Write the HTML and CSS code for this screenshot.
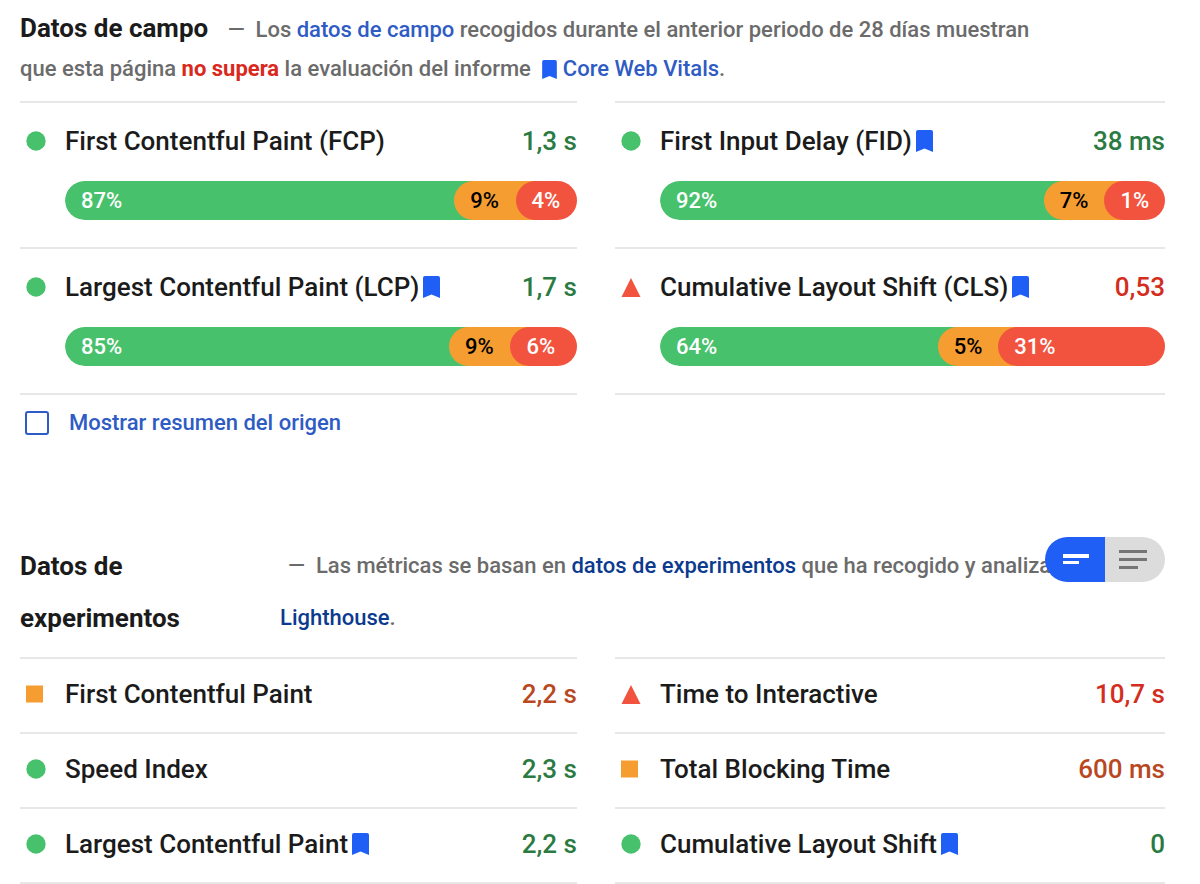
FILE: index.html
```html
<!DOCTYPE html>
<html lang="es">
<head>
<meta charset="utf-8">
<meta name="viewport" content="width=device-width, initial-scale=1">
<title>Datos de campo y de experimentos</title>
<link rel="stylesheet" href="styles.css">
</head>
<body>
<svg class="sprite" aria-hidden="true">
  <symbol id="bookmark" viewBox="0 0 17 22"><path d="M2 0h13a2 2 0 0 1 2 2v20l-8.500-3.500L0 22V2a2 2 0 0 1 2-2z" fill="#205ff5"/></symbol>
  <symbol id="good" viewBox="0 0 20 20"><circle cx="10" cy="10" r="9.700" fill="#48c16c"/></symbol>
  <symbol id="medium" viewBox="0 0 20 20"><path d="M0 1.500h17v17H0z" fill="#f69d31"/></symbol>
  <symbol id="poor" viewBox="0 0 20 20"><path d="M10 1l9.500 19H.5z" fill="#f1533f"/></symbol>
</svg>
<main class="report">
  <section class="field">
    <div class="field-head">
      <h2 class="title">Datos de campo</h2>
      <p class="summary">—&nbsp; Los <a class="link" href="#campo">datos de campo</a> recogidos durante el anterior periodo de 28 días muestran que esta página <strong class="fail">no supera</strong> la evaluación del informe <svg class="mark-small"><use href="#bookmark"/></svg> <a class="link" href="#vitals">Core Web Vitals</a>.</p>
    </div>
    <div class="columns">
      <div class="column">
        <div class="metric">
          <svg class="icon"><use href="#good"/></svg>
          <h3 class="name">First Contentful Paint (FCP)</h3>
          <span class="value good">1,3 s</span>
          <div class="bar"><span class="part fast">87%</span><span class="part average" style="width:12%">9%</span><span class="part slow" style="width:12%">4%</span></div>
        </div>
        <div class="metric">
          <svg class="icon"><use href="#good"/></svg>
          <h3 class="name">Largest Contentful Paint (LCP)<svg class="mark"><use href="#bookmark"/></svg></h3>
          <span class="value good">1,7 s</span>
          <div class="bar"><span class="part fast">85%</span><span class="part average" style="width:12%">9%</span><span class="part slow" style="width:13%">6%</span></div>
        </div>
      </div>
      <div class="column">
        <div class="metric">
          <svg class="icon"><use href="#good"/></svg>
          <h3 class="name">First Input Delay (FID)<svg class="mark"><use href="#bookmark"/></svg></h3>
          <span class="value good">38 ms</span>
          <div class="bar"><span class="part fast">92%</span><span class="part average" style="width:12%">7%</span><span class="part slow" style="width:12%">1%</span></div>
        </div>
        <div class="metric">
          <svg class="icon"><use href="#poor"/></svg>
          <h3 class="name">Cumulative Layout Shift (CLS)<svg class="mark"><use href="#bookmark"/></svg></h3>
          <span class="value poor">0,53</span>
          <div class="bar"><span class="part fast">64%</span><span class="part average" style="width:12%">5%</span><span class="part slow" style="width:33%">31%</span></div>
        </div>
      </div>
    </div>
    <label class="origin"><input class="check" type="checkbox">Mostrar resumen del origen</label>
  </section>

  <section class="lab">
    <div class="lab-head">
      <h2 class="title">Datos de experimentos</h2>
      <p class="summary lab-summary"><span class="dash">—</span>&nbsp; Las métricas se basan en <a class="link dark" href="#lab">datos de experimentos</a> que ha recogido y analizado <a class="link dark" href="#lighthouse">Lighthouse</a>.</p>
      <div class="toggle">
        <button class="view active" type="button" aria-label="Vista compacta"><svg class="glyph" viewBox="0 0 32 24"><path d="M4 6h26v4H4zM4 13h16v3H4z" fill="#fff"/></svg></button>
        <button class="view" type="button" aria-label="Vista detallada"><svg class="glyph" viewBox="0 0 32 24"><path d="M0 2h28v3H0zM0 10h28v3H0zM0 18h19v3H0z" fill="#757575"/></svg></button>
      </div>
    </div>
    <div class="columns">
      <div class="column">
        <div class="metric compact"><svg class="icon"><use href="#medium"/></svg><h3 class="name">First Contentful Paint</h3><span class="value medium">2,2 s</span></div>
        <div class="metric compact"><svg class="icon"><use href="#good"/></svg><h3 class="name">Speed Index</h3><span class="value good">2,3 s</span></div>
        <div class="metric compact"><svg class="icon"><use href="#good"/></svg><h3 class="name">Largest Contentful Paint<svg class="mark"><use href="#bookmark"/></svg></h3><span class="value good">2,2 s</span></div>
      </div>
      <div class="column">
        <div class="metric compact"><svg class="icon"><use href="#poor"/></svg><h3 class="name">Time to Interactive</h3><span class="value poor">10,7 s</span></div>
        <div class="metric compact"><svg class="icon"><use href="#medium"/></svg><h3 class="name">Total Blocking Time</h3><span class="value medium">600 ms</span></div>
        <div class="metric compact"><svg class="icon"><use href="#good"/></svg><h3 class="name">Cumulative Layout Shift<svg class="mark"><use href="#bookmark"/></svg></h3><span class="value good">0</span></div>
      </div>
    </div>
  </section>
</main>
</body>
</html>
```
FILE: styles.css
```css
* { box-sizing: border-box; }
body {
  margin: 0;
  background: #fff;
  color: #1b1b1b;
  font-family: Roboto, "Noto Sans", sans-serif;
  font-size: 22px;
  font-weight: 500;
}
h2, h3, p { margin: 0; }
.sprite { display: none; }
.report { padding: 9px 35px 0 20px; }

.title { font-size: 26px; font-weight: 700; }
.summary { color: #6b6b6b; }
.field-head { max-width: 1040px; padding-bottom: 13px; line-height: 39px; }
.field-head .title,
.field-head .summary { display: inline; }
.field-head .title { margin-right: 14px; }
.link { color: #2f5bc4; text-decoration: none; }
.link.dark { color: #0b3a8f; }
.fail { color: #d9291c; font-weight: 700; }

.columns {
  display: grid;
  grid-template-columns: 557fr 550fr;
  gap: 38px;
}
.column { border-bottom: 2px solid #e7e7e7; }
.metric {
  display: grid;
  grid-template-columns: 20px 1fr auto;
  column-gap: 19px;
  row-gap: 21px;
  align-items: center;
  padding: 19px 0 27px 6px;
  border-top: 2px solid #e7e7e7;
}
.metric.compact { padding: 16px 0 19px 6px; }
.icon { display: block; width: 20px; height: 20px; }
.name, .value { font-size: 26px; font-weight: 500; line-height: 38px; }
.name { display: flex; align-items: center; gap: 4px; }
.mark { width: 17px; height: 22px; }
.mark-small { width: 15px; height: 19px; margin-left: 6px; vertical-align: -3px; }
.good { color: #2a7a42; }
.medium { color: #b9481f; }
.poor { color: #d32d20; }

.bar {
  grid-column: 2 / -1;
  display: flex;
  height: 39px;
  overflow: hidden;
  border-radius: 20px;
  line-height: 39px;
}
.part { padding-left: 16px; border-radius: 20px 0 0 20px; }
.fast { flex: 1; background: #48c16c; box-shadow: 20px 0 #48c16c; color: #fff; }
.average { background: #f69d31; box-shadow: 20px 0 #f69d31; color: #000; }
.slow { background: #f1533f; color: #fff; }

.origin {
  display: flex;
  align-items: center;
  gap: 20px;
  width: fit-content;
  margin-top: 9px;
  padding-left: 5px;
  color: #2f5bc4;
  line-height: 38px;
}
.check {
  width: 24px;
  height: 24px;
  margin: 0;
  appearance: none;
  border: 2px solid #2f5bc4;
  border-radius: 3px;
}

.lab { margin-top: 98px; }
.lab-head {
  position: relative;
  display: grid;
  grid-template-columns: 200px 1fr;
  column-gap: 60px;
  padding-bottom: 13px;
  line-height: 52px;
}
.dash { margin-left: 8px; }
.toggle {
  position: absolute;
  top: -3px;
  right: 0;
  display: flex;
  overflow: hidden;
  border-radius: 23px;
}
.view {
  display: grid;
  place-items: center;
  width: 60px;
  height: 45px;
  padding: 0;
  border: 0;
  background: #dcdcdc;
}
.view.active { background: #205ff5; }
.glyph { width: 32px; height: 24px; }
```
